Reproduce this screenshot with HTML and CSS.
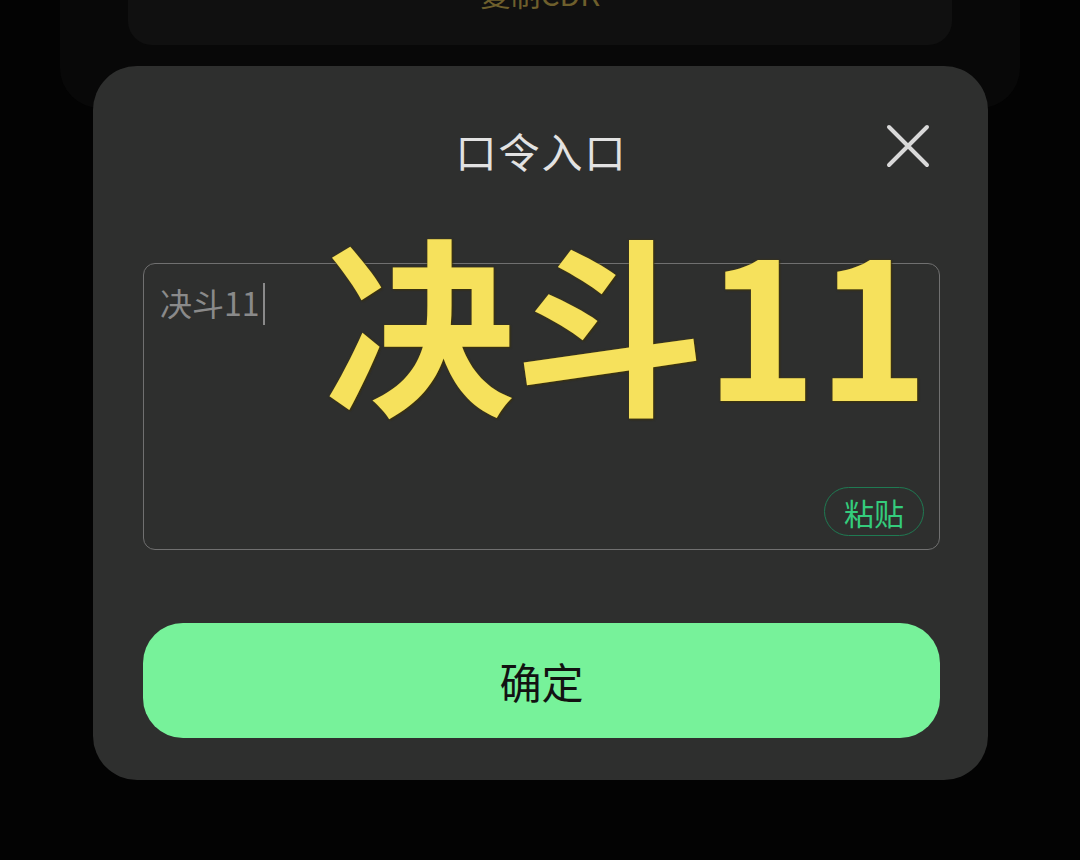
FILE: index.html
```html
<!DOCTYPE html>
<html lang="zh-CN">
<head>
    <meta charset="UTF-8">
    <title>口令入口</title>
    <link rel="stylesheet" href="styles.css">
</head>
<body>

    <!-- folha de fundo (CDK) -->
    <div class="folha">
        <div class="cartao-cdk">
            <span class="texto-cdk">复制CDK</span>
        </div>
    </div>

    <!-- camada do口令 -->
    <div class="camada">
        <div class="modal">
            <div class="cabecalho">
                <span></span>
                <h2 class="titulo">口令入口</h2>
                <button class="btn-fechar" aria-label="关闭">
                    <svg width="48" height="48" viewBox="0 0 48 48">
                        <path d="M5 5 L43 43 M43 5 L5 43" stroke="#d9d9d9" stroke-width="4" stroke-linecap="round" fill="none"/>
                    </svg>
                </button>
            </div>

            <div class="campo">
                <div class="texto-campo">决斗11<span class="cursor"></span></div>
                <button class="btn-colar">粘贴</button>
            </div>

            <button class="btn-confirmar">确定</button>

            <!-- legenda amarela por cima -->
            <div class="legenda">决斗11</div>
        </div>
    </div>

</body>
</html>
```

FILE: styles.css
```css
body {
    margin: 0;
    height: 860px;
    overflow: hidden;
    background-color: #030303;
    font-family: "Noto Sans CJK SC", "Noto Sans", sans-serif;
}

/* Folha escura atrás do modal */
.folha {
    margin: -60px 60px 0;
    height: 168px;
    padding: 0 68px;
    background-color: #080808;
    border-radius: 0 0 40px 40px;
}

.cartao-cdk {
    height: 105px;
    padding-top: 38px;
    box-sizing: border-box;
    background-color: #101010;
    border-radius: 0 0 24px 24px;
    text-align: center;
}

.texto-cdk {
    font-size: 30px;
    line-height: 30px;
    color: #6e5f2c;
}

/* Camada por cima da página */
.camada {
    position: fixed;
    top: 0;
    left: 0;
    right: 0;
    bottom: 0;
    padding-top: 66px;
}

.modal {
    position: relative;
    width: 895px;
    margin-left: 93px;
    box-sizing: border-box;
    padding: 0 48px 42px 50px;
    background-color: #2e2f2e;
    border-radius: 44px;
}

.cabecalho {
    height: 168px;
    display: grid;
    grid-template-columns: 1fr auto 1fr;
    align-items: center;
}

.titulo {
    margin: 0;
    font-size: 41px;
    font-weight: 400;
    color: #e2e2e2;
    letter-spacing: 2px;
}

.btn-fechar {
    justify-self: end;
    margin-right: 8px;
    margin-bottom: 8px;
    padding: 0;
    width: 48px;
    height: 48px;
    border: none;
    background: none;
}

/* Campo de texto */
.campo {
    margin-top: 29px;
    height: 287px;
    box-sizing: border-box;
    padding: 16px 15px 13px 16px;
    border: 1px solid #707070;
    border-radius: 12px;
    display: flex;
    flex-direction: column;
    justify-content: space-between;
}

.texto-campo {
    font-size: 32px;
    line-height: 44px;
    color: #8a8a8a;
}

.cursor {
    display: inline-block;
    width: 2px;
    height: 42px;
    margin-left: 3px;
    vertical-align: -9px;
    background-color: #8a8a8a;
}

.btn-colar {
    align-self: flex-end;
    width: 100px;
    height: 49px;
    padding: 0;
    border: 1px solid #1f7a52;
    border-radius: 25px;
    background: none;
    font-family: inherit;
    font-size: 30px;
    color: #34cc7c;
}

.btn-confirmar {
    display: block;
    width: 100%;
    height: 115px;
    margin-top: 73px;
    border: none;
    border-radius: 40px;
    background-color: #77f29a;
    font-family: inherit;
    font-size: 42px;
    color: #121212;
}

/* Legenda amarela grande */
.legenda {
    position: absolute;
    left: 232px;
    top: 158px;
    font-size: 190px;
    line-height: 1;
    font-weight: 600;
    color: #f6e15c;
    text-shadow: 0 0 2px #4a3d0c, 1px 1px 2px #3a300a;
}
```
